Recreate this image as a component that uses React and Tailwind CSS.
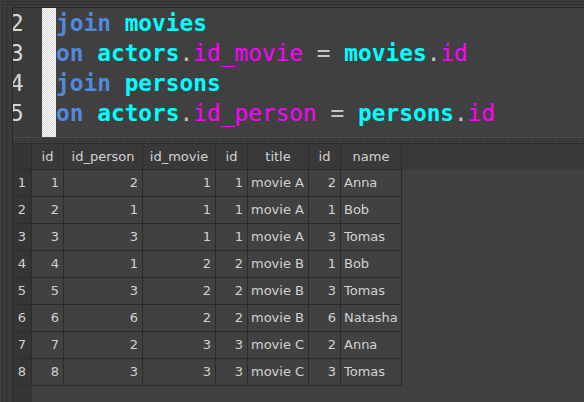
import React from 'react';

// Visible lines of the SQL editor, as [text, colour] tokens
const kw = 'text-[#5289dc]';
const tbl = 'text-[#00ffff]';
const col = 'text-[#ff00ff] font-normal';
const op = 'text-[#c4c4c4] font-normal';

const codeLines = [
  { n: 2, tokens: [['join', kw], [' '], ['movies', tbl]] },
  { n: 3, tokens: [['on', kw], [' '], ['actors', tbl], ['.', op], ['id_movie', col], [' '], ['=', op], [' '], ['movies', tbl], ['.', op], ['id', col]] },
  { n: 4, tokens: [['join', kw], [' '], ['persons', tbl]] },
  { n: 5, tokens: [['on', kw], [' '], ['actors', tbl], ['.', op], ['id_person', col], [' '], ['=', op], [' '], ['persons', tbl], ['.', op], ['id', col]] },
];

// Result grid: widths include the 1px right border of each cell
const columns = [
  { name: 'id', w: 'w-[32px]', num: true },
  { name: 'id_person', w: 'w-[79px]', num: true },
  { name: 'id_movie', w: 'w-[73px]', num: true },
  { name: 'id', w: 'w-[32px]', num: true },
  { name: 'title', w: 'w-[61px]', num: false },
  { name: 'id', w: 'w-[32px]', num: true },
  { name: 'name', w: 'w-[61px]', num: false },
];

const rows = [
  [1, 2, 1, 1, 'movie A', 2, 'Anna'],
  [2, 1, 1, 1, 'movie A', 1, 'Bob'],
  [3, 3, 1, 1, 'movie A', 3, 'Tomas'],
  [4, 1, 2, 2, 'movie B', 1, 'Bob'],
  [5, 3, 2, 2, 'movie B', 3, 'Tomas'],
  [6, 6, 2, 2, 'movie B', 6, 'Natasha'],
  [7, 2, 3, 3, 'movie C', 2, 'Anna'],
  [8, 3, 3, 3, 'movie C', 3, 'Tomas'],
];

function Editor() {
  return (
    <div className="h-[129px] flex shrink-0 bg-[#404040]">
      {/* line number gutter, scrolled so digits are clipped on the left */}
      <div className="w-[29px] bg-[#3b3b3b] overflow-hidden">
        <div className="-ml-[3px] font-['DejaVu_Sans_Mono',monospace] text-[22.8px] leading-[30px] text-[#d6d6d6]">
          {codeLines.map((l) => (
            <div key={l.n}>{l.n}</div>
          ))}
        </div>
      </div>
      {/* checkered marker strip */}
      <div className="w-[14px] bg-[repeating-conic-gradient(#dcdcdc_0_25%,#f7f7f7_0_50%)] bg-[length:2px_2px]" />
      <div className="flex-1 font-['DejaVu_Sans_Mono',monospace] font-bold text-[22.8px] leading-[30px] whitespace-pre">
        {codeLines.map((l) => (
          <div key={l.n}>
            {l.tokens.map(([t, c], i) => (
              <span key={i} className={c}>{t}</span>
            ))}
          </div>
        ))}
      </div>
    </div>
  );
}

function Grid() {
  return (
    <div className="flex-1 flex font-['DejaVu_Sans',sans-serif] text-[13px] text-[#d2d2d2] bg-[#414141]">
      {/* row number column */}
      <div className="w-[19px] flex flex-col bg-[#353535]">
        <div className="h-[26px] border-r border-b border-[#2c2c2c]" />
        {rows.map((r, i) => (
          <div key={i} className="h-[27px] flex items-center justify-center border-r border-b border-[#2c2c2c]">
            {i + 1}
          </div>
        ))}
        <div className="flex-1" />
      </div>
      <div className="flex-1 flex flex-col">
        <div className="h-[26px] flex bg-[#393939]">
          {columns.map((c, i) => (
            <div key={i} className={`${c.w} flex items-center justify-center border-r border-b border-[#2c2c2c]`}>
              {c.name}
            </div>
          ))}
          <div className="flex-1" />
        </div>
        {rows.map((r, i) => (
          <div key={i} className="h-[27px] flex">
            {r.map((v, j) => (
              <div
                key={j}
                className={`${columns[j].w} flex items-center border-r border-b border-[#2c2c2c] ${columns[j].num ? 'justify-end pr-[4px]' : 'pl-[3px]'}`}
              >
                {v}
              </div>
            ))}
          </div>
        ))}
      </div>
    </div>
  );
}

export default function App() {
  return (
    <div className="w-[584px] h-[402px] overflow-hidden bg-[#3c3c3c] pl-[2px] pt-[1px] flex">
      <div className="flex-1 flex border-l border-t border-[#2f2f2f] pl-[3px] pt-[2px]">
        <div className="flex-1 flex border-l border-t border-[#2f2f2f] pl-[5px] pt-[2px] bg-[#3a3a3a]">
          <div className="flex-1 flex flex-col border-l border-t border-[#2a2a2a]">
            <Editor />
            {/* splitter handle */}
            <div className="h-[7px] shrink-0 border-t border-b border-t-[#4a4a4a] border-b-[#2c2c2c] bg-[#383838] bg-[radial-gradient(#505050_0.6px,transparent_0.8px)] bg-[length:3px_3px]" />
            <Grid />
          </div>
        </div>
      </div>
    </div>
  );
}
